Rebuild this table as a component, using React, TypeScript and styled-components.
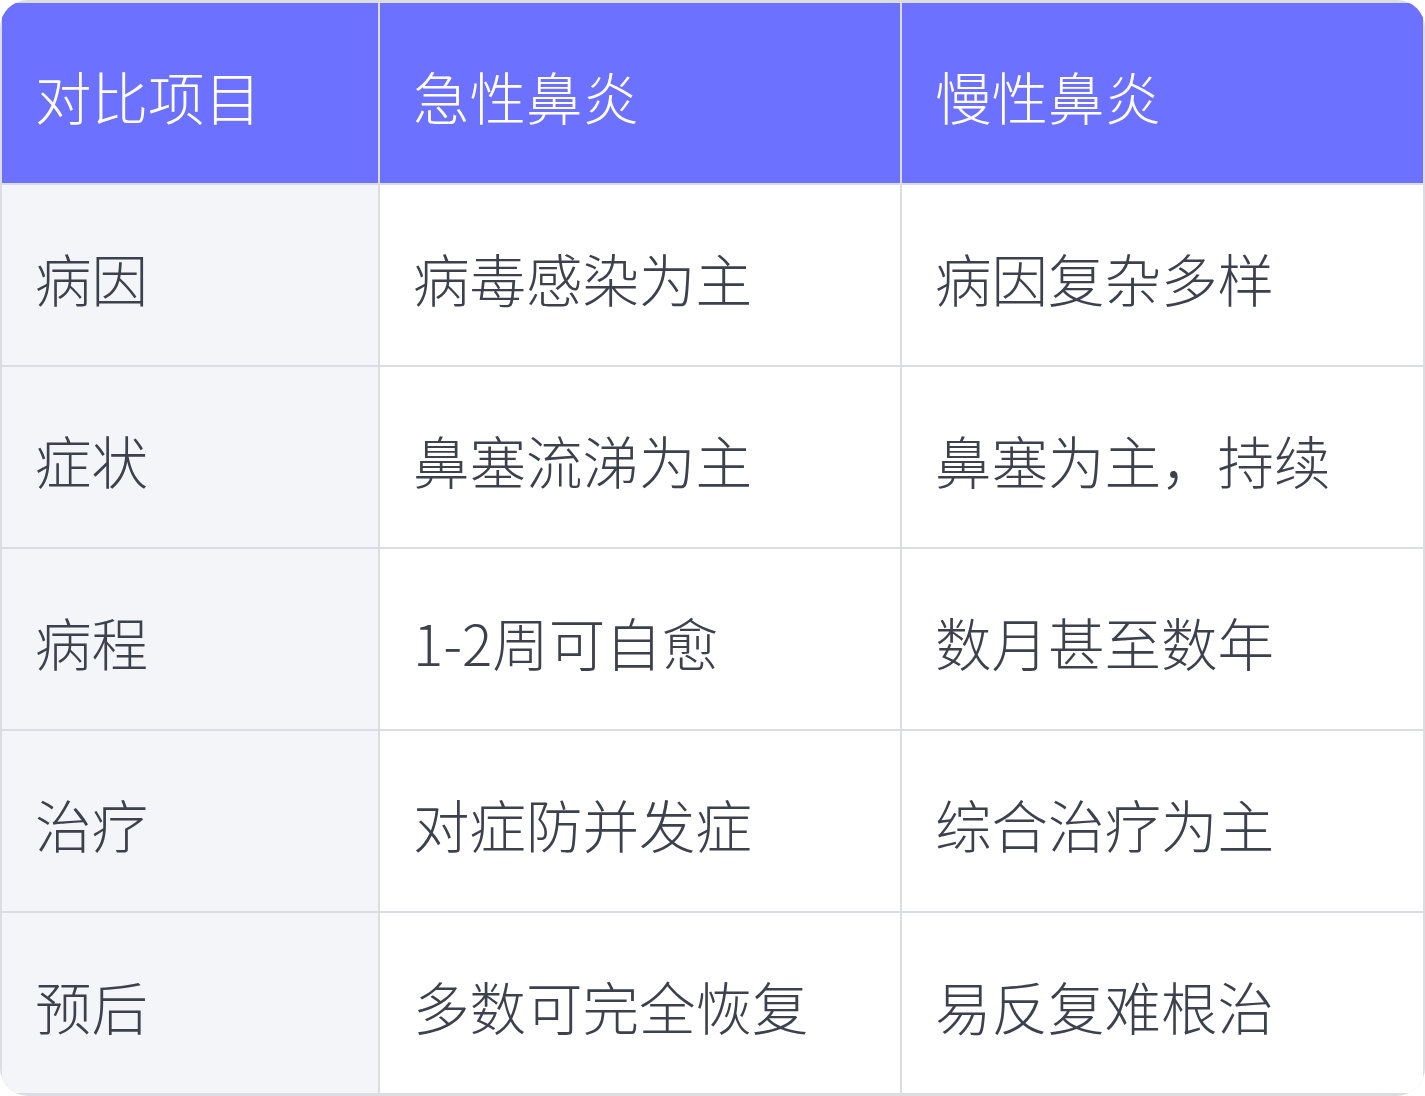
import React from "react";
import styled, { createGlobalStyle } from "styled-components";

const Global = createGlobalStyle`
  html, body { margin: 0; padding: 0; background: #ffffff; }
  body { font-family: "Noto Sans CJK SC", "Noto Sans", sans-serif; }
`;

const Table = styled.div`
  display: grid;
  grid-template-columns: 376px 520px 1fr;
  grid-auto-rows: 180px;
  gap: 2px;
  padding: 3px 2px 3px 2px;
  width: 1425px;
  box-sizing: border-box;
  background: #dcdde3;
  border-radius: 28px;
  overflow: hidden;
`;

const Cell = styled.div<{ $head?: boolean; $first?: boolean }>`
  display: flex;
  align-items: center;
  padding: 4px 0 0 33px;
  box-sizing: border-box;
  font-family: "Noto Sans CJK SC", "Noto Sans", sans-serif;
  font-weight: 300;
  font-size: 56.5px;
  white-space: nowrap;
  color: ${(p) => (p.$head ? "#ffffff" : "#3d404d")};
  background: ${(p) => (p.$head ? "#6c72ff" : p.$first ? "#f4f5f9" : "#ffffff")};
`;

const head = ["对比项目", "急性鼻炎", "慢性鼻炎"];
const rows = [
  ["病因", "病毒感染为主", "病因复杂多样"],
  ["症状", "鼻塞流涕为主", "鼻塞为主，持续"],
  ["病程", "1-2周可自愈", "数月甚至数年"],
  ["治疗", "对症防并发症", "综合治疗为主"],
  ["预后", "多数可完全恢复", "易反复难根治"],
];

export default function App() {
  return (
    <>
      <Global />
      <Table>
        {head.map((h) => (
          <Cell key={h} $head>
            {h}
          </Cell>
        ))}
        {rows.map((r) =>
          r.map((c, i) => (
            <Cell key={r[0] + i} $first={i === 0}>
              {c}
            </Cell>
          ))
        )}
      </Table>
    </>
  );
}
